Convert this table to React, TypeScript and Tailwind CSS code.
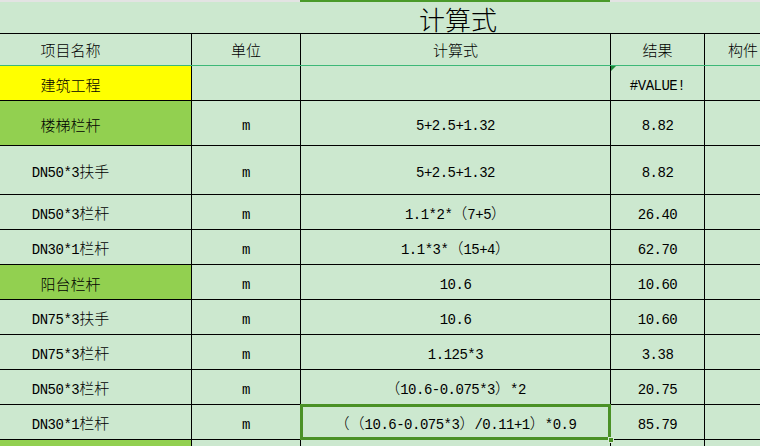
import React from "react";

const CJK = '"Noto Sans CJK SC", "Noto Sans", sans-serif';
const MONO = '"Liberation Mono", "DejaVu Sans Mono", monospace';

function Txt({ s }: { s: string }) {
  const parts = s.match(/[\x20-\x7e]+|[^\x20-\x7e]+/g) || [];
  return (
    <span className="whitespace-pre [text-spacing-trim:space-all]">
      {parts.map((p, i) =>
        /^[\x20-\x7e]+$/.test(p) ? (
          <span key={i} className="text-[14px] tracking-[-0.5px]" style={{ fontFamily: MONO }}>
            {p}
          </span>
        ) : (
          <span key={i} className="text-[15px] font-light [text-spacing-trim:space-all]" style={{ fontFamily: CJK }}>
            {p}
          </span>
        )
      )}
    </span>
  );
}

type Row = {
  name: string;
  unit: string;
  formula: string;
  result: string;
  h: string;
  nameBg?: string;
  err?: boolean;
  selected?: boolean;
};

const rows: Row[] = [
  { name: "建筑工程", unit: "", formula: "", result: "#VALUE!", h: "h-[35px]", nameBg: "bg-[#ffff00]", err: true },
  { name: "楼梯栏杆", unit: "m", formula: "5+2.5+1.32", result: "8.82", h: "h-[45px]", nameBg: "bg-[#92d050]" },
  { name: "DN50*3扶手", unit: "m", formula: "5+2.5+1.32", result: "8.82", h: "h-[49px]" },
  { name: "DN50*3栏杆", unit: "m", formula: "1.1*2*（7+5）", result: "26.40", h: "h-[35px]" },
  { name: "DN30*1栏杆", unit: "m", formula: "1.1*3*（15+4）", result: "62.70", h: "h-[35px]" },
  { name: "阳台栏杆", unit: "m", formula: "10.6", result: "10.60", h: "h-[35px]", nameBg: "bg-[#92d050]" },
  { name: "DN75*3扶手", unit: "m", formula: "10.6", result: "10.60", h: "h-[35px]" },
  { name: "DN75*3栏杆", unit: "m", formula: "1.125*3", result: "3.38", h: "h-[35px]" },
  { name: "DN50*3栏杆", unit: "m", formula: "（10.6-0.075*3）*2", result: "20.75", h: "h-[35px]" },
  { name: "DN30*1栏杆", unit: "m", formula: "（（10.6-0.075*3）/0.11+1）*0.9", result: "85.79", h: "h-[35px]", selected: true },
];

const cols = "grid grid-cols-[192px_109px_310px_94px_76px]";

export default function App() {
  return (
    <div className="w-[760px] h-[446px] overflow-hidden bg-[#cce8cf] text-black">
      {/* column header strip */}
      <div className="flex h-[2px]">
        <div className="w-[300px] bg-[#e3e3e3]" />
        <div className="w-[310px] bg-[#4a9a2a]" />
        <div className="flex-1 bg-[#e3e3e3]" />
      </div>
      {/* title */}
      <div className={`${cols} h-[32px] border-b border-black`}>
        <div />
        <div />
        <div className="flex items-end justify-center">
          <span className="text-[26px] leading-none pb-[1px] pl-[4px] font-light" style={{ fontFamily: CJK }}>
            计算式
          </span>
        </div>
        <div />
        <div />
      </div>
      {/* header */}
      <div className={`${cols} h-[32px] border-b border-[#3cb878]`}>
        <div className="flex items-center justify-center pr-[50px] border-r border-black pt-[1px]">
          <Txt s="项目名称" />
        </div>
        <div className="flex items-center justify-center border-r border-black pt-[1px]">
          <Txt s="单位" />
        </div>
        <div className="flex items-center justify-center border-r border-black pt-[1px]">
          <Txt s="计算式" />
        </div>
        <div className="flex items-center justify-center border-r border-black pt-[1px]">
          <Txt s="结果" />
        </div>
        <div className="flex items-center justify-center pt-[1px]">
          <Txt s="构件" />
        </div>
      </div>
      {rows.map((r, i) => (
        <div key={i} className={`${cols} ${r.h} border-b border-black`}>
          <div className={`flex items-center justify-center pr-[50px] border-r border-black pt-[3px] ${r.nameBg ?? ""}`}>
            <Txt s={r.name} />
          </div>
          <div className="flex items-center justify-center border-r border-black pt-[3px]">
            <Txt s={r.unit} />
          </div>
          <div className="relative flex items-center justify-center border-r border-black pt-[3px]">
            <Txt s={r.formula} />
            {r.selected && (
              <>
                <div className="absolute -left-px -top-px -right-px -bottom-px border-[3px] border-[#4a9126]" />
                <div className="absolute -right-[4px] -bottom-[4px] w-[6px] h-[6px] bg-[#4a9126] border border-[#d9ecd9]" />
              </>
            )}
          </div>
          <div className="relative flex items-center justify-center border-r border-black pt-[3px]">
            <Txt s={r.result} />
            {r.err && (
              <svg className="absolute left-0 top-0" width="5" height="5" viewBox="0 0 5 5">
                <polygon points="0,0 5,0 0,5" fill="#1e8a3a" />
              </svg>
            )}
          </div>
          <div />
        </div>
      ))}
      <div className={`${cols} h-[20px]`}>
        <div className="bg-[#92d050] border-r border-black" />
        <div className="border-r border-black" />
        <div className="border-r border-black" />
        <div className="border-r border-black" />
        <div />
      </div>
    </div>
  );
}
